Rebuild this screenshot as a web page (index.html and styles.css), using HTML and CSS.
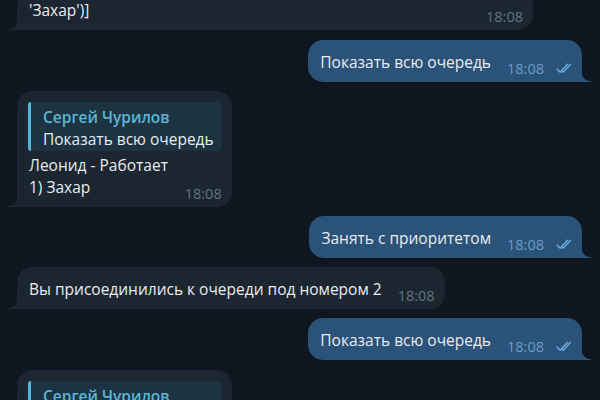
FILE: index.html
```html
<!DOCTYPE html>
<html lang="ru">
<head>
<meta charset="utf-8">
<title>Чат</title>
<link rel="stylesheet" href="styles.css">
</head>
<body>
<div class="chat">
  <div class="msg in first">
    <div class="row">
      <div class="text">'Захар')]</div>
      <div class="meta"><span class="time">18:08</span></div>
    </div>
  </div>

  <div class="msg out">
    <div class="row">
      <div class="text">Показать всю очередь</div>
      <div class="meta"><span class="time">18:08</span>
        <svg class="checks" viewBox="0 0 20 11" width="20" height="11"><path d="M1 6 L4.2 9.3 L11.5 1.2 M7.2 9.3 L14.5 1.2 M6 8 L7.2 9.3" fill="none" stroke="currentColor" stroke-width="1.5" stroke-linecap="round" stroke-linejoin="round"/></svg>
      </div>
    </div>
  </div>

  <div class="msg in">
    <div class="reply">
      <div class="reply-name">Сергей Чурилов</div>
      <div class="reply-text">Показать всю очередь</div>
    </div>
    <div class="row">
      <div class="text">Леонид - Работает<br>1) Захар</div>
      <div class="meta"><span class="time">18:08</span></div>
    </div>
  </div>

  <div class="msg out">
    <div class="row">
      <div class="text">Занять с приоритетом</div>
      <div class="meta"><span class="time">18:08</span>
        <svg class="checks" viewBox="0 0 20 11" width="20" height="11"><path d="M1 6 L4.2 9.3 L11.5 1.2 M7.2 9.3 L14.5 1.2 M6 8 L7.2 9.3" fill="none" stroke="currentColor" stroke-width="1.5" stroke-linecap="round" stroke-linejoin="round"/></svg>
      </div>
    </div>
  </div>

  <div class="msg in">
    <div class="row">
      <div class="text">Вы присоединились к очереди под номером 2</div>
      <div class="meta"><span class="time">18:08</span></div>
    </div>
  </div>

  <div class="msg out">
    <div class="row">
      <div class="text">Показать всю очередь</div>
      <div class="meta"><span class="time">18:08</span>
        <svg class="checks" viewBox="0 0 20 11" width="20" height="11"><path d="M1 6 L4.2 9.3 L11.5 1.2 M7.2 9.3 L14.5 1.2 M6 8 L7.2 9.3" fill="none" stroke="currentColor" stroke-width="1.5" stroke-linecap="round" stroke-linejoin="round"/></svg>
      </div>
    </div>
  </div>

  <div class="msg in last">
    <div class="reply">
      <div class="reply-name">Сергей Чурилов</div>
    </div>
  </div>
</div>
</body>
</html>
```

FILE: styles.css
```css
html, body {
  margin: 0;
  padding: 0;
  height: 100%;
  overflow: hidden;
  background: #0f161f;
}

.chat {
  display: flex;
  flex-direction: column;
  gap: 9px;
  font-family: "Open Sans", "Noto Sans", sans-serif;
  font-size: 15.5px;
  line-height: 22px;
  color: #e8ecef;
}

.msg {
  position: relative;
  box-sizing: border-box;
  padding: 11px 10px 9px 12px;
  border-radius: 15px;
}

.msg.in {
  align-self: flex-start;
  margin-left: 17px;
  background: #1b2631;
  border-bottom-left-radius: 0;
}

.msg.out {
  align-self: flex-end;
  margin-right: 18px;
  background: #2b5278;
  border-bottom-right-radius: 0;
  padding-right: 6px;
}

.msg.in::after,
.msg.out::after {
  content: "";
  position: absolute;
  bottom: 0;
  width: 9px;
  height: 10px;
}

.msg.in::after {
  left: -9px;
  background: #1b2631;
  -webkit-mask: radial-gradient(circle 9.5px at 0 0, transparent 9px, #000 9.6px);
  mask: radial-gradient(circle 9.5px at 0 0, transparent 9px, #000 9.6px);
}

.msg.out::after {
  right: -9px;
  background: #2b5278;
  -webkit-mask: radial-gradient(circle 9.5px at 100% 0, transparent 9px, #000 9.6px);
  mask: radial-gradient(circle 9.5px at 100% 0, transparent 9px, #000 9.6px);
}

.msg.first {
  margin-top: -12px;
  margin-bottom: 1px;
  width: 516px;
}

.msg.last {
  width: 215px;
  margin-top: 1px;
  height: 40px;
  padding-bottom: 0;
  border-bottom-left-radius: 0;
  border-bottom-right-radius: 0;
}

.msg.last::after {
  display: none;
}

.row {
  display: flex;
  align-items: flex-end;
  gap: 16px;
}

.text {
  white-space: nowrap;
}

.meta {
  margin-left: auto;
  margin-bottom: -4px;
  display: flex;
  align-items: center;
  gap: 12px;
  font-size: 14.5px;
  line-height: 16px;
  white-space: nowrap;
}

.in .time {
  color: #637382;
}

.out .time {
  color: #6e9bc5;
}

.checks {
  display: block;
  color: #64abe6;
  margin-top: -2px;
}

.reply {
  background: #1d3341;
  border-left: 3px solid #52b6d6;
  border-radius: 3px 6px 6px 3px;
  padding: 4px 8px 1px 12px;
  margin-bottom: 3px;
  margin-left: -1px;
}

.reply-name {
  color: #5cb6d6;
  font-weight: 600;
}

.reply-text {
  color: #e8ecef;
}
```
